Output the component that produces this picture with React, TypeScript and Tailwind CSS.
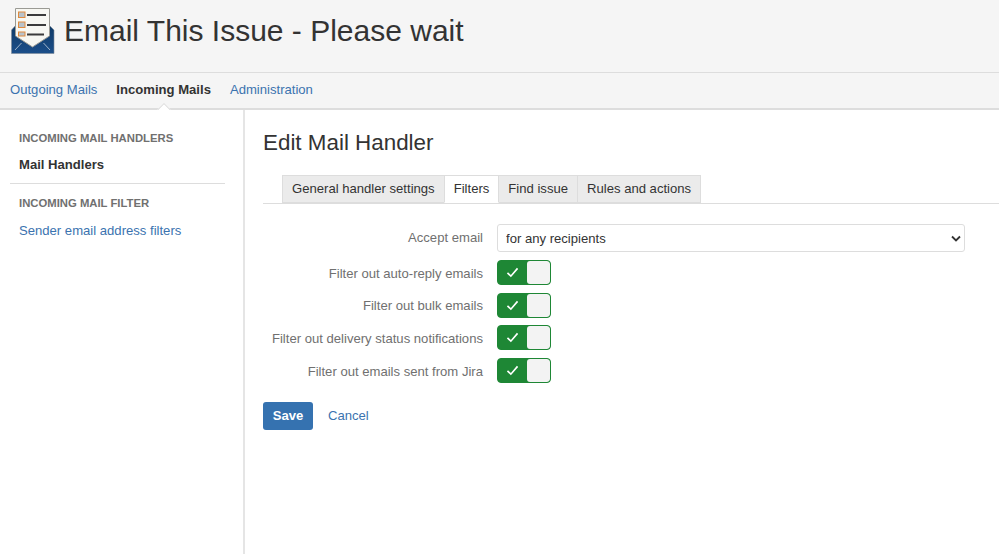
import React from "react";

function Logo() {
  return (
    <svg width="44" height="46" viewBox="0 0 44 46" className="shrink-0">
      <defs>
        <linearGradient id="env" x1="0" y1="0" x2="0" y2="1">
          <stop offset="0" stopColor="#0f3a66" />
          <stop offset="1" stopColor="#1c4f8a" />
        </linearGradient>
      </defs>
      <path d="M0.5 22 L5 17 L38 17 L43 22 V45.5 H0.5 Z" fill="url(#env)" stroke="#7f8c99" strokeWidth="0.6" />
      <path d="M4.5 0.5 H38.5 V28 L21.5 39 L4.5 28 Z" fill="#f7f7f2" stroke="#9a9a94" strokeWidth="1" />
      <rect x="7.5" y="4" width="6.5" height="5.5" fill="#b9c2c9" stroke="#e08a3c" strokeWidth="1" />
      <rect x="7.5" y="14" width="6.5" height="5.5" fill="#b9c2c9" stroke="#e08a3c" strokeWidth="1" />
      <rect x="7.5" y="24" width="6.5" height="4" fill="#b9c2c9" stroke="#e08a3c" strokeWidth="1" />
      <rect x="16" y="6" width="19" height="2" fill="#3b3b3b" />
      <rect x="16" y="16" width="19" height="2" fill="#3b3b3b" />
      <rect x="16" y="25.5" width="17" height="2" fill="#3b3b3b" />
      <path d="M4 42 L10.5 35 M39 42 L32.5 35" stroke="#9fb4c9" strokeWidth="1" />
    </svg>
  );
}

function Toggle() {
  return (
    <div className="flex h-[25px] w-[54px] overflow-hidden rounded-[4px] border border-[#1e8735] bg-[#1e8735]">
      <div className="flex w-[29px] items-center justify-center">
        <svg width="13" height="11" viewBox="0 0 14 12" fill="none">
          <path d="M1.5 6.5 L5.2 10 L12.5 1.5" stroke="#fff" strokeWidth="1.8" />
        </svg>
      </div>
      <div className="flex-1 rounded-[3px] bg-[#f3f3f3]" />
    </div>
  );
}

const filters = [
  "Filter out auto-reply emails",
  "Filter out bulk emails",
  "Filter out delivery status notifications",
  "Filter out emails sent from Jira",
];

const tabBase = "flex h-[28px] items-center border border-[#ddd] px-[9px]";

export default function App() {
  return (
    <div className="flex h-[554px] w-[999px] flex-col overflow-hidden bg-white font-['Liberation_Sans',Arial,sans-serif] text-[13.1px] text-[#333]">
      <header className="flex h-[73px] shrink-0 items-start gap-[9px] border-b border-[#ddd] bg-[#f5f5f5] pl-[11px] pt-[8px]">
        <Logo />
        <h1 className="text-[30px] leading-[46px] text-[#333]">Email This Issue - Please wait</h1>
      </header>

      <nav className="relative flex h-[37px] shrink-0 items-center gap-[19px] border-b-2 border-[#ddd] bg-[#f5f5f5] pb-[1px] pl-[10px]">
        <a className="text-[#3b73af]">Outgoing Mails</a>
        <a className="font-bold text-[#333]">Incoming Mails</a>
        <a className="text-[#3b73af]">Administration</a>
        <span className="absolute bottom-[-2px] left-[157px] h-[7px] w-[14px] overflow-hidden">
          <span className="absolute left-[2px] top-[2px] block h-[10px] w-[10px] rotate-45 border border-[#ddd] bg-white" />
        </span>
      </nav>

      <div className="flex min-h-0 flex-1">
        <aside className="w-[245px] shrink-0 border-r-2 border-[#e5e5e5] pl-[10px] pr-[18px] pt-[22px]">
          <h2 className="pl-[9px] text-[11.3px] font-bold leading-[13px] text-[#707070]">INCOMING MAIL HANDLERS</h2>
          <div className="mt-[12px] pl-[9px] font-bold leading-[16px] text-[#333]">Mail Handlers</div>
          <div className="mt-[10px] border-t border-[#ddd]" />
          <h2 className="mt-[13px] pl-[9px] text-[11.3px] font-bold leading-[13px] text-[#707070]">INCOMING MAIL FILTER</h2>
          <a className="mt-[13px] block pl-[9px] leading-[16px] text-[#3b73af]">Sender email address filters</a>
        </aside>

        <main className="min-w-0 flex-1 pl-[18px] pt-[19px]">
          <h2 className="text-[22.4px] leading-[27px] text-[#333]">Edit Mail Handler</h2>

          <div className="mt-[19px] flex border-b border-[#ddd] pl-[19px]">
            <div className={`${tabBase} bg-[#ebebeb]`}>General handler settings</div>
            <div className={`${tabBase} relative -mb-px -ml-px border-b-white bg-white`}>Filters</div>
            <div className={`${tabBase} -ml-px bg-[#ebebeb]`}>Find issue</div>
            <div className={`${tabBase} -ml-px bg-[#ebebeb]`}>Rules and actions</div>
          </div>

          <form className="mt-[20px]">
            <div className="flex items-center">
              <label className="w-[220px] text-right text-[#707070]">Accept email</label>
              <div className="relative ml-[14px] h-[28px] w-[468px]">
                <select className="h-full w-full appearance-none rounded-[3px] border border-[#ddd] bg-white pl-[8px] pt-[1px] text-[13.1px] text-[#333] outline-none">
                  <option>for any recipients</option>
                </select>
                <svg width="10" height="7" viewBox="0 0 10 7" fill="none" className="pointer-events-none absolute right-[4px] top-[11px]">
                  <path d="M1 1.5 L5 5.5 L9 1.5" stroke="#333" strokeWidth="1.8" />
                </svg>
              </div>
            </div>

            <div className="mt-[8px] flex flex-col gap-[7.67px]">
              {filters.map((f) => (
                <div key={f} className="flex items-center">
                  <label className="w-[220px] whitespace-nowrap pt-[2px] text-right text-[#707070]">{f}</label>
                  <div className="ml-[14px]"><Toggle /></div>
                </div>
              ))}
            </div>

            <div className="mt-[19px] flex items-center">
              <button type="button" className="h-[28px] w-[50px] rounded-[3px] bg-[#3572b0] font-bold text-white">Save</button>
              <a className="ml-[15px] text-[#3b73af]">Cancel</a>
            </div>
          </form>
        </main>
      </div>
    </div>
  );
}
